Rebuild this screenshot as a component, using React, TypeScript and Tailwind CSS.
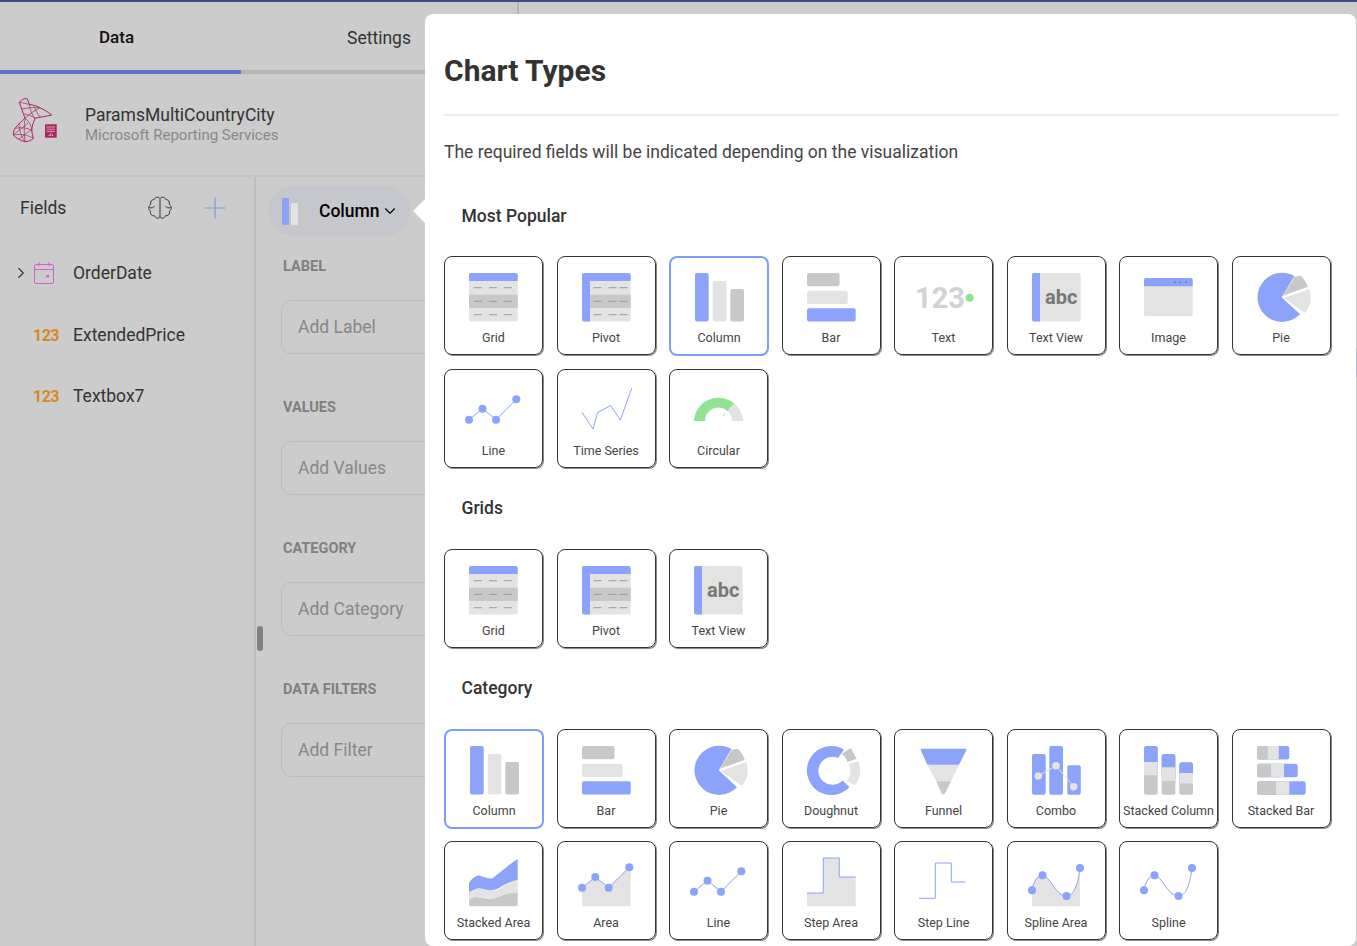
import { ChevronDown, ChevronRight, Plus } from "lucide-react";
import type { ReactNode } from "react";

const BLUE = "#8ba3fa";
const LIGHT = "#e3e3e3";
const MID = "#c8c8c8";

const Dots = ({ pts, fill = BLUE, r = 4 }: { pts: number[][]; fill?: string; r?: number }) => (
  <>
    <polyline points={pts.map((p) => p.join(",")).join(" ")} fill="none" stroke={fill} strokeWidth="1" />
    {pts.map((p, i) => (
      <circle key={i} cx={p[0]} cy={p[1]} r={r} fill={fill} />
    ))}
  </>
);

const GridDashes = ({ xs }: { xs: number[] }) => (
  <>
    {[14.7, 28.3, 41.7].map((y) =>
      xs.map((x) => <rect key={`${x}-${y}`} x={x} y={y - 0.5} width="8" height="1" fill="#999" />)
    )}
  </>
);

const linePts = [[0, 33.7], [13.5, 22.7], [27, 33.7], [47.3, 13.3]];
const areaPts = [[0, 29.7], [13.3, 19], [26.7, 29.7], [47.3, 9.3]];
const splineCurve = "M0 32.3C1 25 5 17.3 10.5 17.3C18 17.3 23 38 34.5 38C42 38 46 26 48 10";
const splinePts = [[0, 32.3], [10.5, 17.3], [34.5, 38], [48, 10]];

const icons: Record<string, ReactNode> = {
  grid: (
    <>
      <rect x="0" y="0" width="48.7" height="48.5" rx="2" fill={LIGHT} />
      <rect x="0" y="21.7" width="48.7" height="13.3" fill={MID} />
      <path d="M0 8V2a2 2 0 0 1 2-2h44.7a2 2 0 0 1 2 2v6z" fill={BLUE} />
      <GridDashes xs={[5, 20, 34.7]} />
    </>
  ),
  pivot: (
    <>
      <rect x="0" y="0" width="48.7" height="48.5" rx="2" fill={LIGHT} />
      <rect x="8" y="21.7" width="40.7" height="13.3" fill={MID} />
      <path d="M0 46.5V2a2 2 0 0 1 2-2h44.7a2 2 0 0 1 2 2v6H8v40.5H2a2 2 0 0 1-2-2z" fill={BLUE} />
      <GridDashes xs={[11.5, 26.5, 37.5]} />
    </>
  ),
  column: (
    <>
      <rect x="0" y="0" width="13.7" height="48.5" rx="2" fill={BLUE} />
      <rect x="17.7" y="8" width="13.7" height="40.5" rx="2" fill={LIGHT} />
      <rect x="35.3" y="16" width="13.7" height="32.5" rx="2" fill={MID} />
    </>
  ),
  bar: (
    <>
      <rect x="0" y="0" width="32.5" height="13.3" rx="2" fill={MID} />
      <rect x="0" y="17.7" width="40.7" height="13.3" rx="2" fill={LIGHT} />
      <rect x="0" y="35.3" width="48.7" height="13.3" rx="2" fill={BLUE} />
    </>
  ),
  text: (
    <>
      <text x="-4" y="35" fontFamily="Roboto" fontWeight="700" fontSize="29" fill="#d2d2d2">123</text>
      <circle cx="50.7" cy="24.7" r="4" fill="#90e393" />
    </>
  ),
  textView: (
    <>
      <rect x="0" y="0" width="48.7" height="48.5" rx="2" fill={LIGHT} />
      <path d="M8 0H2a2 2 0 0 0-2 2v44.5a2 2 0 0 0 2 2h6z" fill={BLUE} />
      <text x="13" y="31" fontFamily="Roboto" fontWeight="700" fontSize="20" fill="#777">abc</text>
    </>
  ),
  image: (
    <>
      <rect x="0" y="5" width="48.7" height="38.3" rx="2" fill={LIGHT} />
      <path d="M0 13.3V7a2 2 0 0 1 2-2h44.7a2 2 0 0 1 2 2v6.3z" fill={BLUE} />
      <circle cx="31" cy="9.3" r="1" fill="#6f7fb5" />
      <circle cx="36.3" cy="9.3" r="1" fill="#6f7fb5" />
      <circle cx="42" cy="9.3" r="1" fill="#6f7fb5" />
    </>
  ),
  pie: (
    <>
      <path d="M24.7 24.3L37.4 3A24.6 24.6 0 1 0 43 41.2z" fill={BLUE} />
      <path d="M25.7 22.7L37.7 3.7L43.7 2.7A24 24 0 0 1 50.7 14z" fill={MID} />
      <path d="M27 25L52.3 16A25 25 0 0 1 48 40z" fill={LIGHT} />
    </>
  ),
  line: <Dots pts={linePts} />,
  timeSeries: (
    <polyline
      points="0,26.3 11,43 15.7,26.3 28.7,19.7 38.3,34 49.7,2.3"
      fill="none"
      stroke={BLUE}
      strokeWidth="1"
    />
  ),
  circular: (
    <>
      <path d="M40 17.3A24.5 24.5 0 0 1 49 35H38A13.5 13.5 0 0 0 33.5 25z" fill={LIGHT} />
      <path d="M0 35A24.5 24.5 0 0 1 40 17.3L33.5 25A13.5 13.5 0 0 0 11 35z" fill="#90e393" />
      <path d="M28.7 30.3L31 27.7" stroke="#90e393" strokeWidth="1" />
    </>
  ),
  doughnut: (
    <>
      <path d="M24.5 24.5m12.5-21A24.5 24.5 0 1 0 42.5 41L35.5 34.5A14 14 0 1 1 31 12z" fill={BLUE} />
      <path d="M34.7 7.7L43.7 2L49.7 12.7L40.3 16.3A14 14 0 0 0 34.7 7.7z" fill={MID} />
      <path d="M41.3 18L51.3 15.3A25 25 0 0 1 48 39.3L39.7 35A14 14 0 0 0 41.3 18z" fill={LIGHT} />
    </>
  ),
  funnel: (
    <>
      <path d="M8.3 18.7H40L32 35.3H17.3z" fill={LIGHT} />
      <path d="M17.3 35.3H32L26 47.5Q24.3 49.5 22.6 47.5z" fill={MID} />
      <path d="M3 2.7H46Q47.8 2.7 47.2 4.5L40 18.7H8.3L1.9 4.5Q1.2 2.7 3 2.7z" fill={BLUE} />
    </>
  ),
  combo: (
    <>
      <rect x="0" y="8" width="13.7" height="40.7" rx="2" fill={BLUE} />
      <rect x="17.3" y="0" width="13.7" height="48.7" rx="2" fill={BLUE} />
      <rect x="35.3" y="19.3" width="13.5" height="29.4" rx="2" fill={BLUE} />
      <Dots pts={[[6.3, 30], [24, 19.7], [41.7, 40.7]]} fill={LIGHT} r={3.8} />
    </>
  ),
  stackedColumn: (
    <>
      {[
        [0, 0, 16, 29.3],
        [17.7, 8, 21.3, 35],
        [35.3, 16.3, 27, 37.7],
      ].map(([x, top, blueEnd, lightEnd]) => (
        <g key={x}>
          <rect x={x} y={top} width="13.7" height={48.7 - top} rx="2.5" fill={MID} />
          <rect x={x} y={top} width="13.7" height={lightEnd - top} rx="2.5" fill={BLUE} />
          <rect x={x} y={blueEnd} width="13.7" height={lightEnd - blueEnd} fill={LIGHT} />
        </g>
      ))}
    </>
  ),
  stackedBar: (
    <>
      {[
        [0, 32.3, 10.7, 21.7],
        [17.7, 40.7, 14, 27],
        [35.3, 48.7, 19, 32.3],
      ].map(([y, w, midEnd, lightEnd]) => (
        <g key={y}>
          <rect x="0" y={y} width={w} height="13.5" rx="2.5" fill={BLUE} />
          <rect x="0" y={y} width={lightEnd} height="13.5" rx="2.5" fill={MID} />
          <rect x={midEnd} y={y} width={lightEnd - midEnd} height="13.5" fill={LIGHT} />
        </g>
      ))}
    </>
  ),
  stackedArea: (
    <>
      <path d="M0 40C5 38 10 39 22 41C30 38 40 34 48.7 33V46.3a2 2 0 0 1-2 2H2a2 2 0 0 1-2-2z" fill={MID} />
      <path d="M0 32C5 29 9 29 13 31C18 33 24 34 30 31C36 28 42 23 48.7 20V35C42 35 36 36 30 39C24 42 18 41 12 39C8 38 4 40 0 42z" fill={LIGHT} />
      <path d="M0 25C4 19 8 17 11 17.7C15 19 19 21 23 20.5C31 15 40 6 48.7 1V21.7C42 23 36 26 30 30C25 33 20 33 14 31C9 29 5 31 0 34.3z" fill={BLUE} />
    </>
  ),
  area: (
    <>
      <polygon points="0,29.7 13.3,19 26.7,29.7 47.3,9.3 48.7,9.3 48.7,48.3 0,48.3" fill={LIGHT} />
      <Dots pts={areaPts} />
    </>
  ),
  stepArea: (
    <>
      <polygon points="0,35 16.3,35 16.3,0 32.3,0 32.3,19 48.7,19 48.7,48.3 0,48.3" fill={LIGHT} />
      <polyline points="0,35 16.3,35 16.3,0 32.3,0 32.3,19 48.7,19" fill="none" stroke={BLUE} strokeWidth="1" />
    </>
  ),
  stepLine: (
    <polyline points="0,40.3 16.3,40.3 16.3,5 32.3,5 32.3,24 46.3,24" fill="none" stroke={BLUE} strokeWidth="1" />
  ),
  splineArea: (
    <>
      <path d={`${splineCurve}V48.3H0z`} fill={LIGHT} />
      <path d={splineCurve} fill="none" stroke={BLUE} strokeWidth="1" />
      {splinePts.map((p) => (
        <circle key={p[0]} cx={p[0]} cy={p[1]} r="4" fill={BLUE} />
      ))}
    </>
  ),
  spline: (
    <>
      <path d={splineCurve} fill="none" stroke={BLUE} strokeWidth="1" />
      {splinePts.map((p) => (
        <circle key={p[0]} cx={p[0]} cy={p[1]} r="4" fill={BLUE} />
      ))}
    </>
  ),
};

const sections = [
  {
    title: "Most Popular",
    items: [
      ["Grid", "grid"],
      ["Pivot", "pivot"],
      ["Column", "column", true],
      ["Bar", "bar"],
      ["Text", "text"],
      ["Text View", "textView"],
      ["Image", "image"],
      ["Pie", "pie"],
      ["Line", "line"],
      ["Time Series", "timeSeries"],
      ["Circular", "circular"],
    ],
  },
  {
    title: "Grids",
    items: [
      ["Grid", "grid"],
      ["Pivot", "pivot"],
      ["Text View", "textView"],
    ],
  },
  {
    title: "Category",
    items: [
      ["Column", "column", true],
      ["Bar", "bar"],
      ["Pie", "pie"],
      ["Doughnut", "doughnut"],
      ["Funnel", "funnel"],
      ["Combo", "combo"],
      ["Stacked Column", "stackedColumn"],
      ["Stacked Bar", "stackedBar"],
      ["Stacked Area", "stackedArea"],
      ["Area", "area"],
      ["Line", "line"],
      ["Step Area", "stepArea"],
      ["Step Line", "stepLine"],
      ["Spline Area", "splineArea"],
      ["Spline", "spline"],
    ],
  },
] as const;

function ChartCard({ label, icon, selected }: { label: string; icon: string; selected?: boolean }) {
  return (
    <div
      className={
        selected
          ? "w-[100px] h-[100px] rounded-lg border-2 border-[#7f9bff] flex flex-col items-center"
          : "w-[99px] h-[99px] rounded-lg border border-[#333] shadow-[1px_1px_0_#8a8a8a] flex flex-col items-center"
      }
    >
      <svg
        viewBox="0 0 50 50"
        className={selected ? "w-[50px] h-[50px] mt-[15px] ml-[1px] overflow-visible" : "w-[50px] h-[50px] mt-4 ml-[1px] overflow-visible"}
      >
        {icons[icon]}
      </svg>
      <span className="text-[12.5px] leading-4 text-[#444] whitespace-nowrap mt-[7px]">{label}</span>
    </div>
  );
}

function ConfigField({ label, placeholder }: { label: string; placeholder: string }) {
  return (
    <div className="h-[141px]">
      <div className="h-5 leading-5 pt-[1px] text-[14.5px] font-bold text-[#808080] ml-[2px]">{label}</div>
      <div className="mt-6 h-[54px] w-[240px] rounded-[10px] border border-[#bdbdbd] pl-4 flex items-center text-[17.5px] text-[#888]">
        {placeholder}
      </div>
    </div>
  );
}

function SsrsLogo() {
  return (
    <svg viewBox="0 0 48 48" className="w-12 h-12 self-start mt-[23px]" fill="none" stroke="#a8255f" strokeWidth="1">
      <path d="M9.3 5.3C11 3 14 1.5 16.7 1.3C18 3 18.5 5 19.3 7.3C23 8 27 9 30 10.7C34 12.5 38 15 41.7 18C36 19.5 30 20 25 21.3C23.5 25 22 29 21.7 33C22 36 22.8 39 23.3 41.3C21 43.5 18 44.7 15 44.7C10 43.5 6 41 3.3 38C3.5 35 4 33 5 31.3C8 27.5 12 24 15 21.3C13 16 11 10 9.3 5.3z" />
      <path d="M9.3 5.3C14 6 17 7 19.3 7.3M12 12C17 11 24 10 30 10.7M15 21.3C19 17 24 14 30 10.7M14 17C19 18 24 20 25 21.3M19.3 7.3C20 13 22 18 25 21.3M15 21.3C19 24 22 30 21.7 33M5 31.3C11 30 17 31 21.7 33M3.3 38C9 37 16 37 23.3 41.3M15 44.7C14 38 14 28 15 21.3M9 26C9 32 11 40 15 44.7M21.7 33C17 35 12 40 9 42M18 26C15 29 8 34 3.3 38M30 20C27 16 25 12 24 9.5" strokeWidth="0.7" />
      <rect x="35" y="27.3" width="11.7" height="13.4" fill="#a8255f" stroke="none" />
      <path d="M36.5 30H45M36.5 32.2H45M36.5 34.4H45" stroke="#e6c3d4" strokeWidth="0.8" />
      <path d="M40.8 39V36.2M39 39V37.8M42.6 39V37.4" stroke="#e6c3d4" strokeWidth="1" />
    </svg>
  );
}

function BrainIcon() {
  return (
    <svg viewBox="0 0 26 26" className="w-[26px] h-[26px]" fill="none" stroke="#333" strokeWidth="1">
      <path d="M13 3.5C11.5 1.5 8 1.8 7.2 4.5C4.5 4.5 3 7 3.8 9.2C1.4 10.5 1 14.5 3.4 16C2.8 19.2 5.2 21.2 7.6 20.8C8.6 23.6 11.8 23.8 13 21.8" />
      <path d="M13 3.5C14.5 1.5 18 1.8 18.8 4.5C21.5 4.5 23 7 22.2 9.2C24.6 10.5 25 14.5 22.6 16C23.2 19.2 20.8 21.2 18.4 20.8C17.4 23.6 14.2 23.8 13 21.8" />
      <path d="M13 3.5V21.8M2.4 12.5C4.6 13.4 6.4 12.8 7.4 11M23.6 12.5C21.4 13.4 19.6 12.8 18.6 11" />
    </svg>
  );
}

function CalendarIcon() {
  return (
    <svg viewBox="0 0 22 24" className="w-[22px] h-6" fill="none" stroke="#d65ad6" strokeWidth="1">
      <rect x="1.5" y="3.5" width="19" height="19" rx="1.5" />
      <path d="M1.5 8.5H20.5M6 1V5.5M16 1V5.5" />
      <rect x="13.5" y="14" width="2.5" height="2.5" fill="#d65ad6" stroke="none" />
    </svg>
  );
}

export default function App() {
  return (
    <div className="relative h-[946px] w-[1357px] overflow-hidden bg-[#cccccc] font-['Roboto',sans-serif] border-t-2 border-[#3d4a8c]">
      <div className="w-[519px] h-full border-r-2 border-[#b5b5b5]">
        {/* Tabs */}
        <div className="flex h-[72px] border-b-4 border-[#b8b8b8] relative">
          <div className="w-[241px] flex items-center justify-center pr-2 pt-1 text-[17px] font-medium text-[#111]">Data</div>
          <div className="flex-1 flex items-center justify-center pt-1 text-[17.5px] text-[#333]">Settings</div>
          <div className="absolute left-0 -bottom-1 w-[241px] h-1 bg-[#5b72c8]" />
        </div>

        {/* Data source */}
        <div className="h-[103px] border-b-2 border-[#c4c4c4] flex items-center pl-[10px]">
          <SsrsLogo />
          <div className="ml-[27px] -mt-[2px]">
            <div className="text-[17.5px] leading-[22px] text-[#333]">ParamsMultiCountryCity</div>
            <div className="text-[15px] leading-[18px] text-[#888]">Microsoft Reporting Services</div>
          </div>
        </div>

        <div className="flex h-[769px]">
          {/* Fields */}
          <div className="w-[256px] h-full border-r-2 border-[#bdbdbd] pl-5">
            <div className="flex items-center h-[60px] mt-[1px] -mb-[1px]">
              <span className="text-[17.5px] text-[#333] w-[127px]">Fields</span>
              <BrainIcon />
              <Plus className="w-[34px] h-[34px] ml-[25px] text-[#7f94e0]" strokeWidth={0.8} />
            </div>
            <div className="flex items-center h-[62px] -ml-5 mt-[5px]">
              <ChevronRight className="w-[18px] h-[18px] ml-[12px] text-[#333]" strokeWidth={1.5} />
              <span className="ml-[3px]"><CalendarIcon /></span>
              <span className="ml-[18px] text-[17.5px] text-[#333]">OrderDate</span>
            </div>
            <div className="mt-[1px]">
              {["ExtendedPrice", "Textbox7"].map((f) => (
                <div key={f} className="flex items-center h-[61px] -ml-5 pl-[33px]">
                  <span className="w-[40px] text-base font-bold tracking-[-0.5px] text-[#d48a1e]">123</span>
                  <span className="text-[17.5px] text-[#333]">{f}</span>
                </div>
              ))}
            </div>
          </div>

          {/* Visualization config */}
          <div className="flex-1 relative overflow-hidden pl-[25px]">
            <div className="mt-[9px] ml-[-13px] w-[142px] h-[50px] rounded-full bg-[#c6c7cc] flex items-center pl-[14px]">
              <svg viewBox="0 0 26 27" className="w-[26px] h-[27px]">
                <rect x="0" y="0" width="7" height="27" rx="1" fill={BLUE} />
                <rect x="9" y="5" width="7" height="22" rx="1" fill={LIGHT} />
                <rect x="18" y="9" width="8" height="18" rx="1" fill={MID} />
              </svg>
              <span className="ml-[11px] text-[17.5px] font-medium text-black">Column</span>
              <ChevronDown className="w-[18px] h-[18px] ml-[1px] text-black" strokeWidth={1.5} />
            </div>
            <div className="mt-5">
              <ConfigField label="LABEL" placeholder="Add Label" />
              <ConfigField label="VALUES" placeholder="Add Values" />
              <ConfigField label="CATEGORY" placeholder="Add Category" />
              <ConfigField label="DATA FILTERS" placeholder="Add Filter" />
            </div>
          </div>
        </div>
      </div>

      {/* Splitter handle */}
      <div className="absolute left-[257px] top-[624px] w-[6px] h-[25px] rounded-sm bg-[#808080]" />

      {/* Chart types popover */}
      <div className="absolute left-[413px] top-[197px] w-0 h-0 border-y-[12px] border-y-transparent border-r-[12px] border-r-white" />
      <div className="absolute left-[425px] top-3 right-[1px] h-[932px] bg-white rounded-lg pl-[19px] pr-[17px]">
        <h1 className="text-[30px] leading-9 font-bold text-[#333] mt-[39px]">Chart Types</h1>
        <div className="h-[2px] bg-[#ededed] mt-[25px]" />
        <p className="text-[17.5px] leading-6 text-[#444] mt-6">The required fields will be indicated depending on the visualization</p>
        {sections.map((s, i) => (
          <section key={s.title} className={i === 0 ? "mt-[39.5px]" : "mt-[27.5px]"}>
            <h2 className="h-6 leading-6 text-[17.5px] font-medium text-[#333] ml-[17.5px]">{s.title}</h2>
            <div className="mt-[28.5px] grid grid-cols-[repeat(8,100px)] auto-rows-[100px] gap-[12.5px]">
              {s.items.map((it, j) => (
                <ChartCard key={j} label={it[0]} icon={it[1]} selected={it.length > 2} />
              ))}
            </div>
          </section>
        ))}
      </div>
      <div className="absolute right-0 top-[346px] w-[1px] h-[29px] bg-[#b8bdd0]" />
    </div>
  );
}
